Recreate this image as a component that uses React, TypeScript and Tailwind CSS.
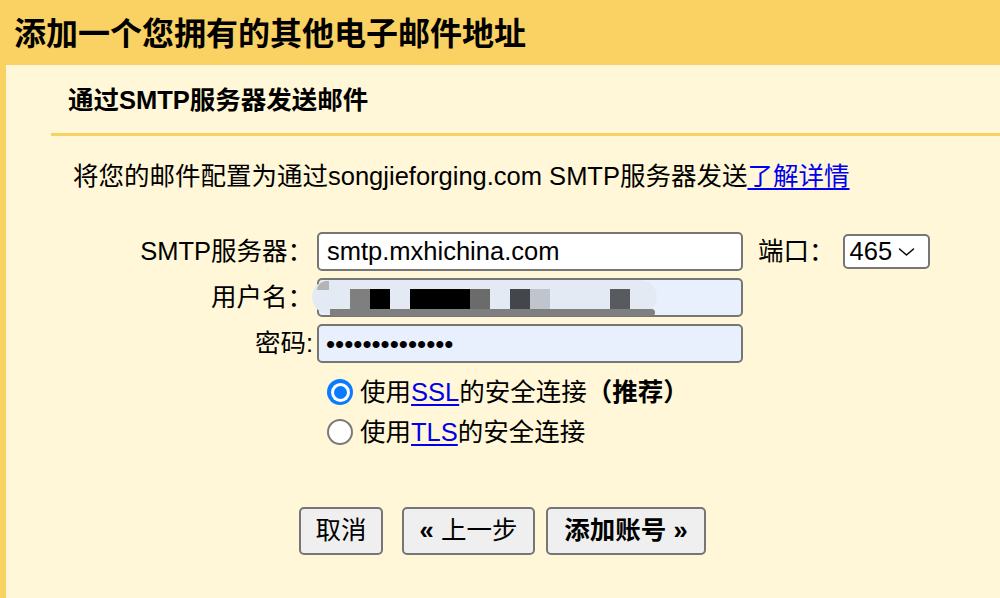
const font = "font-['Liberation_Sans','Noto_Sans_CJK_SC',sans-serif]"

function Label({ children }: { children: React.ReactNode }) {
  return <div className="w-[307px] shrink-0 text-right leading-[39px]">{children}</div>
}

function Radio({ checked }: { checked?: boolean }) {
  if (checked) {
    return (
      <span className="w-[26px] h-[26px] rounded-full bg-[#0a7bff] flex items-center justify-center shrink-0">
        <span className="w-[19px] h-[19px] rounded-full bg-white flex items-center justify-center">
          <span className="w-[13px] h-[13px] rounded-full bg-[#0a7bff]" />
        </span>
      </span>
    )
  }
  return <span className="w-[26px] h-[26px] rounded-full bg-white border-2 border-[#7a7a7a] shrink-0" />
}

export default function App() {
  return (
    <div className={`${font} w-[1000px] h-[598px] bg-[#fad163] text-black overflow-hidden flex flex-col`}>
      <div className="h-[65px] shrink-0 flex items-center pl-[14px] pt-[2px]">
        <h1 className="text-[32px] font-bold leading-none">添加一个您拥有的其他电子邮件地址</h1>
      </div>

      <div className="ml-[6px] flex-1 bg-[#fff7d7] flex flex-col">
        <div className="h-[68px] flex items-center pl-[62px] pt-[3px]">
          <h2 className="text-[25.5px] font-bold leading-none">通过SMTP服务器发送邮件</h2>
        </div>
        <div className="ml-[45px] h-[3px] bg-[#fad163]" />

        <p className="mt-[22px] pl-[67px] text-[25.5px] leading-[36px]">
          将您的邮件配置为通过songjieforging.com SMTP服务器发送
          <a href="#" className="text-[#0000ee] underline underline-offset-[3px]">了解详情</a>
        </p>

        <div className="mt-[38px] flex flex-col gap-[7px] text-[25.5px]">
          <div className="flex items-center gap-[4px]">
            <Label>SMTP服务器：</Label>
            <div className="w-[426px] h-[39px] bg-white border-2 border-[#767676] rounded-[5px] flex items-center pl-[8px] leading-none">
              smtp.mxhichina.com
            </div>
            <span className="ml-[11px]">端口：</span>
            <div className="ml-[4px] w-[87px] h-[35px] bg-white border-2 border-[#767676] rounded-[5px] flex items-center pl-[5px] gap-[6px] leading-none">
              465
              <svg width="17" height="10" viewBox="0 0 17 10" fill="none" stroke="black" strokeWidth="1.5" strokeLinecap="round" strokeLinejoin="round">
                <polyline points="1.5,2 8.5,8 15.5,2" />
              </svg>
            </div>
          </div>

          <div className="flex items-center gap-[4px]">
            <Label>用户名：</Label>
            <div className="relative w-[426px] h-[39px] bg-[#e8f0fe] border-2 border-[#767676] rounded-[5px]">
              <div className="absolute left-[-7px] top-[0px] w-[345px] h-[34px] rounded-full bg-[#e3eaf4]" />
              <div className="absolute left-[-2px] top-[1px] w-[12px] h-[9px] rounded-tl-full bg-[#b4b4b4]" />
              <div className="absolute left-[11px] top-[29px] w-[325px] h-[7px] rounded-r-full bg-[#7f7f7f]" />
              <div className="absolute left-[31px] top-[9px] w-[20px] h-[20px] bg-[#7f7f7f]" />
              <div className="absolute left-[51px] top-[9px] w-[20px] h-[20px] bg-black" />
              <div className="absolute left-[91px] top-[9px] w-[60px] h-[20px] bg-black" />
              <div className="absolute left-[151px] top-[9px] w-[20px] h-[20px] bg-[#6b6b6b]" />
              <div className="absolute left-[191px] top-[9px] w-[20px] h-[20px] bg-[#43464b]" />
              <div className="absolute left-[211px] top-[9px] w-[20px] h-[20px] bg-[#c0c4cc]" />
              <div className="absolute left-[291px] top-[9px] w-[20px] h-[20px] bg-[#585a5e]" />
            </div>
          </div>

          <div className="flex items-center gap-[4px]">
            <Label>密码:</Label>
            <div className="w-[426px] h-[39px] bg-[#e8f0fe] border-2 border-[#767676] rounded-[5px] flex items-center pl-[7px] text-[26px] tracking-[0px] leading-none">
              ••••••••••••••
            </div>
          </div>
        </div>

        <div className="mt-[9px] ml-[321px] flex flex-col text-[25.5px]">
          <label className="h-[40px] flex items-center gap-[7px]">
            <Radio checked />
            <span>
              使用<a href="#" className="text-[#0000ee] underline underline-offset-[3px]">SSL</a>的安全连接<span className="font-bold">（推荐）</span>
            </span>
          </label>
          <label className="h-[40px] flex items-center gap-[7px]">
            <Radio />
            <span>
              使用<a href="#" className="text-[#0000ee] underline underline-offset-[3px]">TLS</a>的安全连接
            </span>
          </label>
        </div>

        <div className="mt-[55px] ml-[293px] flex text-[25.5px]">
          <button className="w-[84px] h-[48px] bg-[#efefef] border-2 border-[#767676] rounded-[5px] leading-none">取消</button>
          <button className="ml-[19px] w-[133px] h-[48px] bg-[#efefef] border-2 border-[#767676] rounded-[5px] leading-none">
            <span className="font-bold">«</span> 上一步
          </button>
          <button className="ml-[11px] w-[160px] h-[48px] bg-[#efefef] border-2 border-[#767676] rounded-[5px] font-bold leading-none">
            添加账号 »
          </button>
        </div>
      </div>
    </div>
  )
}
